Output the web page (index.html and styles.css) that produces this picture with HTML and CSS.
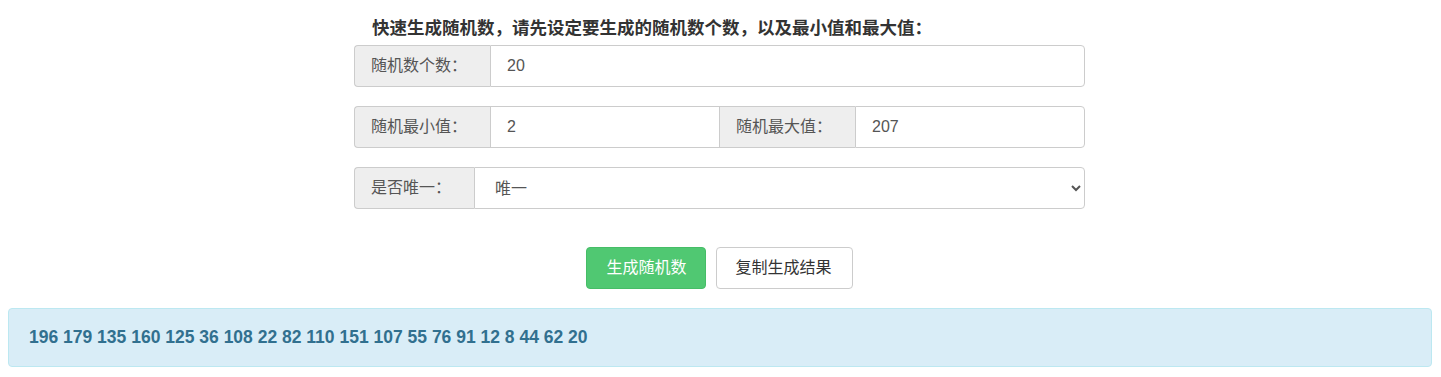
FILE: index.html
```html
<!DOCTYPE html>
<html>
<head>
  <meta charset="UTF-8">
  <title>随机数生成器</title>
  <link rel="stylesheet" href="styles.css">
</head>
<body>
  <div class="panel">
    <p class="intro">快速生成随机数，请先设定要生成的随机数个数，以及最小值和最大值：</p>

    <div class="input-group">
      <span class="addon">随机数个数：</span>
      <input class="field" type="text" value="20">
    </div>

    <div class="input-group">
      <span class="addon">随机最小值：</span>
      <input class="field" type="text" value="2">
      <span class="addon middle">随机最大值：</span>
      <input class="field" type="text" value="207">
    </div>

    <div class="input-group">
      <span class="addon">是否唯一：</span>
      <select class="field select">
        <option>唯一</option>
        <option>不唯一</option>
      </select>
    </div>

    <div class="actions">
      <button class="btn btn-green">生成随机数</button>
      <button class="btn btn-plain">复制生成结果</button>
    </div>
  </div>

  <div class="result">196 179 135 160 125 36 108 22 82 110 151 107 55 76 91 12 8 44 62 20</div>
</body>
</html>
```

FILE: styles.css
```css
body {
  margin: 0;
  background: #fff;
  color: #333;
  font-family: "Liberation Sans", "Noto Sans CJK SC", sans-serif;
  font-size: 16px;
}

.panel {
  width: 731px;
  margin: 0 auto;
  padding: 16px 2px 0 0; /* nudges the block 1px left of center */
}

.intro {
  margin: 0 0 5px;
  padding-left: 18px;
  font-size: 17.5px;
  font-weight: bold;
  line-height: 24px;
  color: #333;
}

.input-group {
  display: flex;
  margin-bottom: 19px;
}

.addon {
  flex: none;
  padding: 9px 23px 9px 16px;
  line-height: 22px;
  color: #555;
  background: #eee;
  border: 1px solid #ccc;
  border-right: 0;
  border-radius: 4px 0 0 4px;
}

.addon.middle {
  border-radius: 0;
  border-left: 1px solid #ccc;
}

.field {
  flex: 1;
  min-width: 0;
  height: 42px;
  box-sizing: border-box;
  padding: 9px 16px;
  font-family: inherit;
  font-size: 16px;
  line-height: 22px;
  color: #555;
  background: #fff;
  border: 1px solid #ccc;
  border-radius: 0 4px 4px 0;
  outline: none;
}

/* the left input of the min/max row sits between two labels */
.input-group .field:nth-child(2):not(:last-child) {
  border-radius: 0;
  border-right: 0;
}

.select {
  padding: 0 10px 0 16px;
}

.actions {
  display: flex;
  justify-content: center;
  gap: 10px;
  margin-top: 38px;
  margin-bottom: 19px;
}

.btn {
  padding: 9px 19px;
  font-family: inherit;
  font-size: 16px;
  line-height: 22px;
  border-radius: 4px;
  border: 1px solid #ccc;
  cursor: pointer;
}

.btn-green {
  padding: 9px 18px 9px 19px;
  color: #fff;
  background: #50c872;
  border-color: #46bd67;
}

.btn-plain {
  padding: 9px 20px 9px 19px;
  color: #333;
  background: #fff;
}

.result {
  margin: 0 9px 0 8px;
  padding: 19px 20px;
  font-size: 17.5px;
  font-weight: bold;
  line-height: 19px;
  color: #31708f;
  background: #d9edf7;
  border: 1px solid #bce8f1;
  border-radius: 4px;
}
```
